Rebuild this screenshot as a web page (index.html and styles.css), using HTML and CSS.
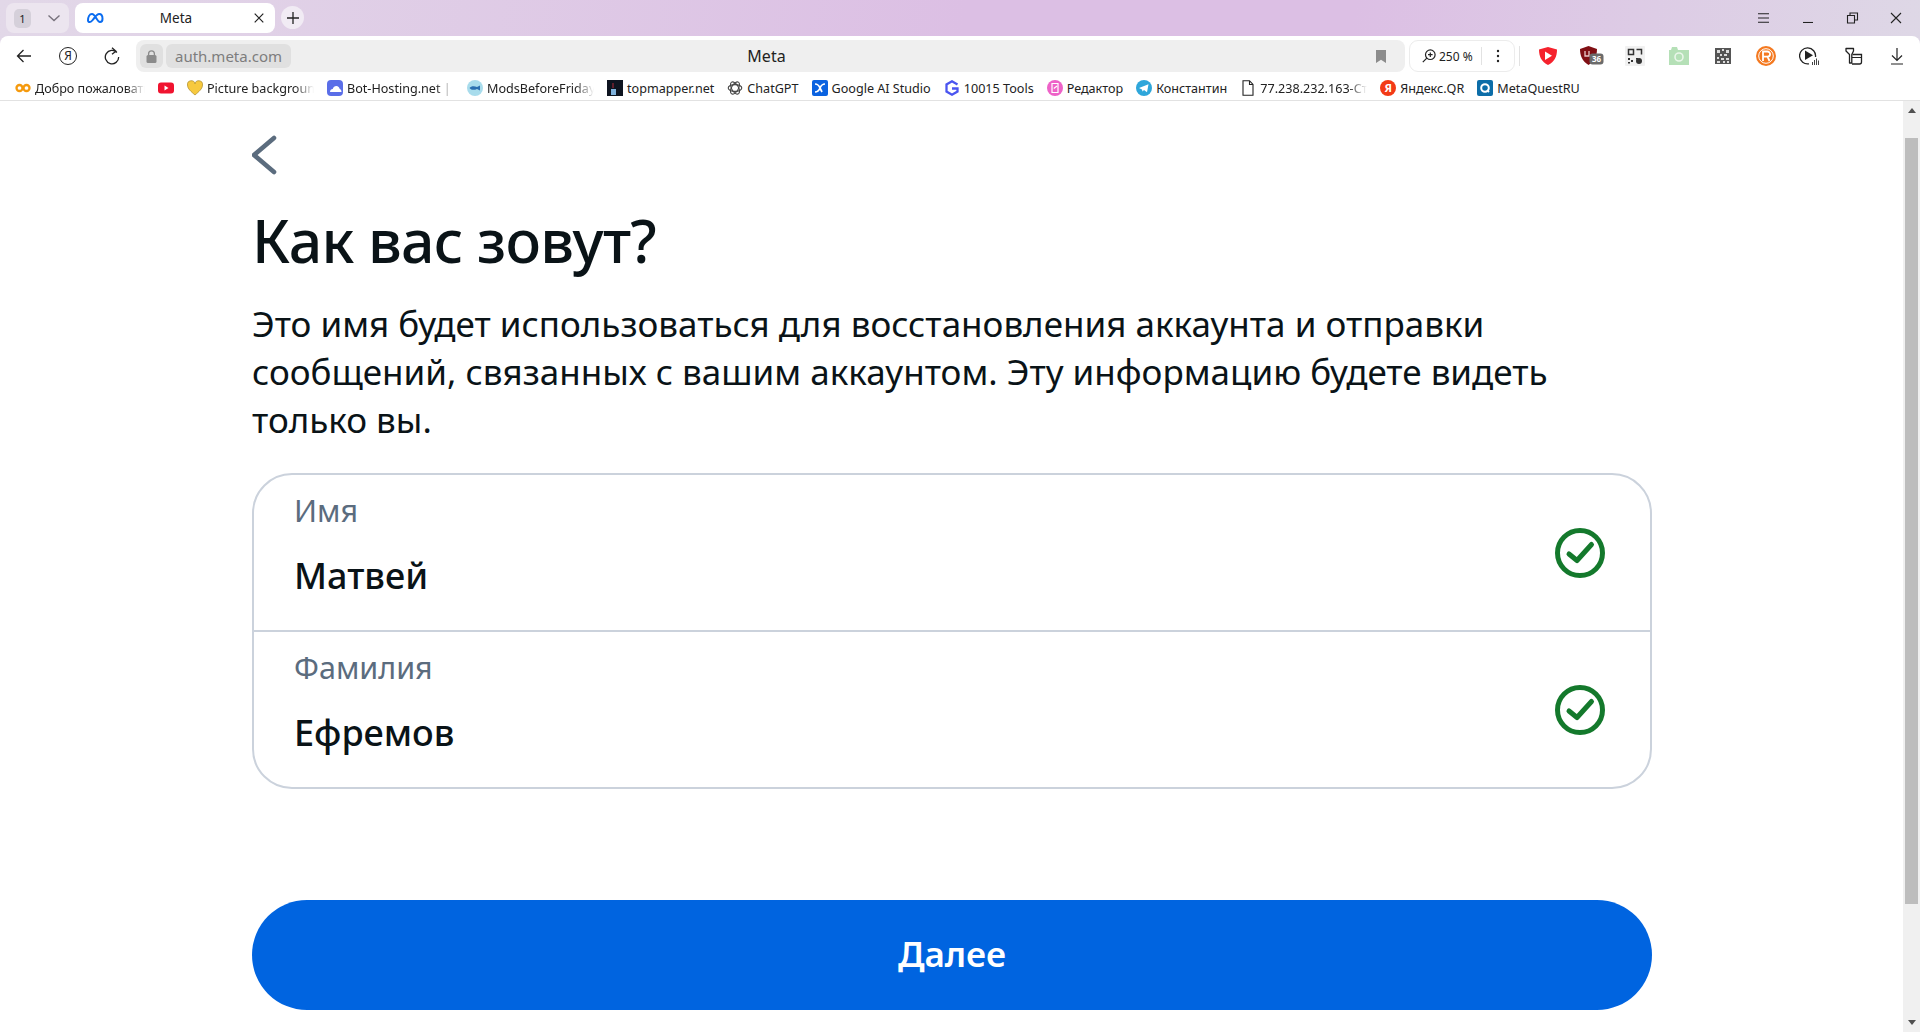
FILE: index.html
```html
<!DOCTYPE html>
<html lang="ru">
<head>
    <meta charset="UTF-8">
    <meta name="viewport" content="width=device-width, initial-scale=1.0">
    <title>Meta</title>
    <link rel="stylesheet" href="styles.css">
</head>
<body>
    <div id="chrome">
        <div id="tabstrip">
            <div class="tab-counter">
                <span class="tab-count">1</span>
                <svg class="tab-more" width="14" height="8" viewBox="0 0 14 8"><path d="M1.5 1.5 7 6.500l5.500-5" fill="none" stroke="#77727c" stroke-width="1.400"/></svg>
            </div>
            <div class="tab">
                <svg width="18" height="12" viewBox="0 0 18 12"><path d="M2 8.500C2 5 3.500 2 6 2c3.500 0 5 8 8 8 1.500 0 2.500-1.200 2.500-3.300C16.500 4 15.200 2 13.200 2 10.500 2 8.700 5.500 6.700 8c-.9 1.200-1.800 2-2.800 2C2.700 10 2 9.500 2 8.500z" fill="none" stroke="#0a6cf0" stroke-width="2"/></svg>
                <span class="tab-title">Meta</span>
                <svg width="10" height="10" viewBox="0 0 10 10"><path d="M.7.7l8.600 8.600M9.300.7.700 9.300" stroke="#222" stroke-width="1.200"/></svg>
            </div>
            <div class="tab-new">
                <svg width="12" height="12" viewBox="0 0 12 12"><path d="M6 0v12M0 6h12" stroke="#222" stroke-width="1.300"/></svg>
            </div>
            <div class="window-controls">
                <svg width="14" height="10" viewBox="0 0 14 10"><path d="M1 .8h11M1 5h11M1 9.200h11" stroke="#222" stroke-width="1.100"/></svg>
                <svg width="14" height="10" viewBox="0 0 14 10"><path d="M2 9.500h10" stroke="#222" stroke-width="1.100"/></svg>
                <svg width="14" height="12" viewBox="0 0 14 12"><path d="M2.500 3.500h7v7.500h-7zM5 3.500V1h7.500v7H9.500" fill="none" stroke="#222" stroke-width="1.100"/></svg>
                <svg width="14" height="12" viewBox="0 0 14 12"><path d="M2 1l10 10M12 1 2 11" stroke="#222" stroke-width="1.100"/></svg>
            </div>
        </div>

        <div id="toolbar">
            <div class="nav-row">
                <div class="nav-btn">
                    <svg width="16" height="14" viewBox="0 0 16 14"><path d="M15 7H1.500M7.500 1 1.500 7l6 6" fill="none" stroke="#222" stroke-width="1.300"/></svg>
                </div>
                <div class="nav-btn">
                    <span class="ya-circle">Я</span>
                </div>
                <div class="nav-btn">
                    <svg width="16" height="18" viewBox="0 0 16 18"><path d="M12.900 5.500A6.700 6.700 0 1 0 14.700 10M8 .8l3.900 3.400L8 7.300" fill="none" stroke="#222" stroke-width="1.300"/></svg>
                </div>
                <div class="urlbar">
                    <span class="lock-chip">
                        <svg width="11" height="13" viewBox="0 0 11 13"><path d="M2.600 5.500V3.700a2.900 2.900 0 0 1 5.800 0v1.800" fill="none" stroke="#8b8b8b" stroke-width="1.300"/><rect x=".5" y="5" width="10" height="8" rx="1.500" fill="#8b8b8b"/></svg>
                    </span>
                    <span class="domain-chip">auth.meta.com</span>
                    <span class="page-title">Meta</span>
                    <svg class="bookmark-flag" width="10" height="13" viewBox="0 0 10 13"><path d="M0 0h10v13L5 9.800 0 13z" fill="#8c8c8c"/></svg>
                </div>
                <div class="zoom-box">
                    <svg width="14" height="14" viewBox="0 0 14 14"><circle cx="8.300" cy="5.700" r="4.800" fill="none" stroke="#222" stroke-width="1.200"/><path d="M4.800 9.200.8 13.200M8.300 3.400v4.600M6 5.700h4.600" stroke="#222" stroke-width="1.200"/></svg>
                    <span class="zoom-value">250 %</span>
                    <span class="zoom-sep"></span>
                    <svg width="4" height="14" viewBox="0 0 4 14"><circle cx="2" cy="2" r="1.200" fill="#222"/><circle cx="2" cy="7" r="1.200" fill="#222"/><circle cx="2" cy="12" r="1.200" fill="#222"/></svg>
                </div>
                <span class="toolbar-sep"></span>
                <div class="extensions">
                    <div class="ext">
                        <svg width="20" height="20" viewBox="0 0 20 20"><path d="M1 3.500 10 1l9 2.500c0 7-2.500 12.500-9 15.500C3.500 16 1 10.500 1 3.500z" fill="#f5222d"/><path d="M7 5.500v8.500l7-4.200z" fill="#fff"/></svg>
                    </div>
                    <div class="ext">
                        <svg width="24" height="20" viewBox="0 0 24 20"><path d="M0 3 8.500 0 17 3c0 7-2.500 12.500-8.500 16C2.500 15.500 0 10 0 3z" fill="#800f14"/><path d="M5 5v5h4V5" fill="none" stroke="#e8c9c9" stroke-width="1.300"/><rect x="9.500" y="7.500" width="14" height="11" rx="3" fill="#6b6b6b"/><text x="16.500" y="16" class="ext-badge">36</text></svg>
                    </div>
                    <div class="ext">
                        <svg width="20" height="20" viewBox="0 0 20 20"><rect width="20" height="20" rx="1" fill="#f1f1f1"/><path d="M3.500 3.500h5v5h-5zM11.500 3.500h5v5" fill="none" stroke="#333" stroke-width="1.500"/><path d="M3 12h2v2H3zM6 14h2v2H6zM3 16h2v1.500H3zM11 12h2v1.500h-2z" fill="#333"/><circle cx="14" cy="15" r="3" fill="#333"/></svg>
                    </div>
                    <div class="ext">
                        <svg width="20" height="18" viewBox="0 0 20 18"><path d="M0 3h2l1-3h5l1 3h11v15H0z" fill="#b5e0b7"/><circle cx="10" cy="10" r="4" fill="none" stroke="#eaf6ea" stroke-width="1.600"/></svg>
                    </div>
                    <div class="ext">
                        <svg width="16" height="16" viewBox="0 0 16 16"><rect width="16" height="16" fill="#555"/><path d="M2 2h3v3H2zM7 1h2v2H7zM11 2h3v3h-3zM5 6h2v2H5zM9 6h3v2H9zM2 9h2v2H2zM6 10h3v2H6zM11 10h3v2h-3zM2 13h3v2H2zM8 13h2v2H8zM12 13h2v2h-2z" fill="#ddd"/></svg>
                    </div>
                    <div class="ext">
                        <svg width="20" height="20" viewBox="0 0 20 20"><circle cx="10" cy="10" r="10" fill="#f47920"/><circle cx="10" cy="10" r="7.300" fill="none" stroke="#fff" stroke-width="1"/><path d="M7 15V5.500h4.500a2.600 2.600 0 0 1 0 5.200H7m4.500 0 2 4.300" fill="none" stroke="#fff" stroke-width="1.800"/></svg>
                    </div>
                    <div class="ext">
                        <svg width="21" height="20" viewBox="0 0 21 20"><path d="M16.500 11A8 8 0 1 0 10 17.800" fill="none" stroke="#222" stroke-width="1.300"/><path d="M6 4.500v9.500l8-4.800z" fill="#222"/><path d="M13.500 16v3M15.500 14v5M17.500 12.500v6.500M19.500 14.500v4.500" stroke="#444" stroke-width="1"/></svg>
                    </div>
                    <div class="ext">
                        <svg width="18" height="18" viewBox="0 0 18 18"><path d="M1 1.500h7.500v2.500L6.800 7.500V16H4.500V7.500L1 4z" fill="none" stroke="#222" stroke-width="1.300" stroke-linejoin="round"/><path d="M7.500 7.500h9V15c0 1.200-1 2-2 2H7" fill="none" stroke="#222" stroke-width="1.300"/><path d="M7 10.500h9.500" stroke="#222" stroke-width="1"/></svg>
                    </div>
                    <div class="ext">
                        <svg width="14" height="17" viewBox="0 0 14 17"><path d="M7 0v12M2 7.500l5 5 5-5M1 16h12" fill="none" stroke="#222" stroke-width="1.200"/></svg>
                    </div>
                </div>
            </div>

            <div class="bookmarks">
                <div class="bm bm-cut bm-first">
                    <svg width="16" height="16" viewBox="0 0 16 16"><circle cx="4.500" cy="8" r="3" fill="none" stroke="#f59a0e" stroke-width="2.300"/><circle cx="11.500" cy="8" r="3" fill="none" stroke="#f59a0e" stroke-width="2.300"/></svg>
                    <span>Добро пожаловать</span>
                </div>
                <div class="bm">
                    <svg width="16" height="16" viewBox="0 0 16 16"><rect y="2.500" width="16" height="11" rx="3" fill="#f0132f"/><path d="M6.500 5.500v5l4-2.500z" fill="#fff"/></svg>
                </div>
                <div class="bm bm-cut bm-mid">
                    <svg width="16" height="16" viewBox="0 0 16 16"><path d="M8 15C4 11.500.5 8.800.5 5A3.800 3.800 0 0 1 8 3.800 3.800 3.800 0 0 1 15.500 5C15.500 8.800 12 11.500 8 15z" fill="#f7c93e" stroke="#a98a2a" stroke-width=".7"/></svg>
                    <span>Picture background</span>
                </div>
                <div class="bm bm-cut bm-mid">
                    <svg width="16" height="16" viewBox="0 0 16 16"><rect width="16" height="16" rx="4" fill="#5a6ee8"/><path d="M3 12c0-2 1.300-3 2.700-3 .5-2 2-3 3.500-3 2 0 3.300 1.500 3.500 3 1 .2 1.800 1.300 1.800 3z" fill="#fff"/></svg>
                    <span>Bot-Hosting.net | Free</span>
                </div>
                <div class="bm bm-cut bm-mid">
                    <svg width="16" height="16" viewBox="0 0 16 16"><circle cx="8" cy="8" r="8" fill="#a8dcec"/><path d="M2.500 8C4 6 7 5.500 10 7l3-1.500v5L10 9c-3 1.500-6 1-7.500-1z" fill="#2a6fb0"/></svg>
                    <span>ModsBeforeFriday</span>
                </div>
                <div class="bm">
                    <svg width="16" height="16" viewBox="0 0 16 16"><rect width="16" height="16" fill="#0e1420"/><rect x="4" y="9" width="5" height="6" fill="#7fb2dc"/><path d="M6 3v5" stroke="#7a2230" stroke-width="1.500"/></svg>
                    <span>topmapper.net</span>
                </div>
                <div class="bm">
                    <svg width="16" height="16" viewBox="0 0 16 16"><g fill="none" stroke="#444" stroke-width="1.100"><ellipse cx="8" cy="8" rx="6.800" ry="3.400"/><ellipse cx="8" cy="8" rx="6.800" ry="3.400" transform="rotate(60 8 8)"/><ellipse cx="8" cy="8" rx="6.800" ry="3.400" transform="rotate(120 8 8)"/></g></svg>
                    <span>ChatGPT</span>
                </div>
                <div class="bm">
                    <svg width="16" height="16" viewBox="0 0 16 16"><rect width="16" height="16" rx="2" fill="#0a62e0"/><path d="M3 4c2 0 4 1.500 5 4 1-2.500 2-4 5-4M8 8c-1 2.500-2.500 4-5 4M8 8l2 4" fill="none" stroke="#fff" stroke-width="1.700"/></svg>
                    <span>Google AI Studio</span>
                </div>
                <div class="bm">
                    <svg width="16" height="16" viewBox="0 0 16 16"><path d="M13.500 4.500 8 1.300 2.500 4.500v7L8 14.700l5.500-3.200V8.500H8" fill="none" stroke="#4b55f0" stroke-width="2.300"/></svg>
                    <span>10015 Tools</span>
                </div>
                <div class="bm">
                    <svg width="16" height="16" viewBox="0 0 16 16"><circle cx="8" cy="8" r="8" fill="#ee62c8"/><path d="M5 3.500h6v9H5z" fill="none" stroke="#fff" stroke-width="1.200"/><path d="M6.800 8.500 10 6" stroke="#fff" stroke-width="1.200"/></svg>
                    <span>Редактор</span>
                </div>
                <div class="bm">
                    <svg width="16" height="16" viewBox="0 0 16 16"><circle cx="8" cy="8" r="8" fill="#2ea6da"/><path d="M3 8l9.500-3.800-1.500 8L8 10l-1.500 1.500L6 9.500z" fill="#fff"/></svg>
                    <span>Константин</span>
                </div>
                <div class="bm bm-cut bm-ip">
                    <svg width="16" height="16" viewBox="0 0 16 16"><path d="M3 .7h6.500L13 4.500v10.800H3zM9.500.7v3.800H13" fill="none" stroke="#222" stroke-width="1.100"/></svg>
                    <span>77.238.232.163-Статус</span>
                </div>
                <div class="bm">
                    <span class="ya-mark">Я</span>
                    <span>Яндекс.QR</span>
                </div>
                <div class="bm">
                    <svg width="16" height="16" viewBox="0 0 16 16"><rect width="16" height="16" rx="2" fill="#0c6da8"/><circle cx="8" cy="8" r="3.800" fill="none" stroke="#fff" stroke-width="2"/><path d="M10 10l2 2" stroke="#fff" stroke-width="1.800"/></svg>
                    <span>MetaQuestRU</span>
                </div>
            </div>
        </div>
    </div>

    <div id="viewport">
        <main class="page">
            <svg class="back" width="26" height="40" viewBox="0 0 26 40"><path d="M22 3 2 20l20 17" fill="none" stroke="#5b6c7e" stroke-width="4.600" stroke-linecap="round" stroke-linejoin="round"/></svg>
            <h1>Как вас зовут?</h1>
            <p class="lead">Это имя будет использоваться для восстановления аккаунта и отправки сообщений, связанных с вашим аккаунтом. Эту информацию будете видеть только вы.</p>
            <div class="fields">
                <div class="field">
                    <div class="field-text">
                        <label>Имя</label>
                        <div class="field-value">Матвей</div>
                    </div>
                    <svg width="50" height="50" viewBox="0 0 50 50"><circle cx="25" cy="25" r="22.500" fill="none" stroke="#14792c" stroke-width="5"/><path d="M14 26l8 6.500L36.500 16.500" fill="none" stroke="#14792c" stroke-width="5" stroke-linecap="round" stroke-linejoin="round"/></svg>
                </div>
                <div class="field">
                    <div class="field-text">
                        <label>Фамилия</label>
                        <div class="field-value">Ефремов</div>
                    </div>
                    <svg width="50" height="50" viewBox="0 0 50 50"><circle cx="25" cy="25" r="22.500" fill="none" stroke="#14792c" stroke-width="5"/><path d="M14 26l8 6.500L36.500 16.500" fill="none" stroke="#14792c" stroke-width="5" stroke-linecap="round" stroke-linejoin="round"/></svg>
                </div>
            </div>
            <button class="next">Далее</button>
        </main>
        <div class="scrollbar">
            <span class="arrow-up"></span>
            <div class="scroll-track"><div class="scroll-thumb"></div></div>
            <span class="arrow-down"></span>
        </div>
    </div>
</body>
</html>
```

FILE: styles.css
```css
* {
    box-sizing: border-box;
}
html, body {
    height: 100%;
}
body {
    margin: 0;
    display: flex;
    flex-direction: column;
    overflow: hidden;
    background: #fff;
    color: #222;
    font-family: "Noto Sans", "Open Sans", sans-serif;
}

/* tab strip */
#chrome {
    background: linear-gradient(100deg, #e2d8e8 0%, #dcbfe4 50%, #dcbfe4 70%, #ded8e6 100%);
}
#tabstrip {
    height: 36px;
    padding: 3px 0 3px 6px;
    display: flex;
    align-items: stretch;
}
.tab-counter {
    width: 63px;
    display: flex;
    align-items: center;
    padding-left: 8px;
    background: #ece5ef;
    border-radius: 8px;
}
.tab-count {
    width: 17px;
    height: 19px;
    background: #d5d0da;
    border-radius: 5px;
    font-size: 11px;
    line-height: 19px;
    text-align: center;
}
.tab-more {
    margin-left: 16px;
}
.tab {
    width: 200px;
    margin-left: 6px;
    padding: 0 11px 0 11px;
    display: flex;
    align-items: center;
    background: #fff;
    border-radius: 8px;
}
.tab-title {
    flex: 1;
    text-align: center;
    font-size: 13.500px;
    padding-right: 6px;
}
.tab-new {
    width: 23px;
    height: 23px;
    margin: 3px 0 0 6px;
    display: flex;
    align-items: center;
    justify-content: center;
    background: #f1ebf4;
    border-radius: 50%;
}
.window-controls {
    margin-left: auto;
    display: flex;
    align-items: center;
    gap: 30px;
    padding-right: 17px;
}

/* toolbar */
#toolbar {
    height: 65px;
    background: #fff;
    border-radius: 8px 8px 0 0;
    border-bottom: 1px solid #e2e2e2;
}
.nav-row {
    height: 40px;
    padding: 4px 0 4px 2px;
    display: flex;
    align-items: center;
}
.nav-btn {
    width: 44px;
    display: flex;
    justify-content: center;
}
.ya-circle {
    width: 18px;
    height: 18px;
    border: 1.2px solid #222;
    border-radius: 50%;
    font-size: 12px;
    line-height: 16px;
    text-align: center;
}
.urlbar {
    position: relative;
    width: 1269px;
    height: 32px;
    margin-left: 2px;
    padding: 0 19px 0 4px;
    display: flex;
    align-items: center;
    gap: 3px;
    background: #efefef;
    border-radius: 8px;
}
.lock-chip {
    width: 23px;
    height: 24px;
    display: flex;
    align-items: center;
    justify-content: center;
    background: #e0e0e0;
    border-radius: 6px;
}
.domain-chip {
    width: 125px;
    height: 24px;
    background: #e0e0e0;
    border-radius: 6px;
    color: #7d7d7d;
    font-size: 15px;
    line-height: 24px;
    text-align: center;
}
.page-title {
    position: absolute;
    left: 0;
    right: 8px;
    text-align: center;
    font-size: 16px;
}
.bookmark-flag {
    margin-left: auto;
}
.zoom-box {
    width: 106px;
    height: 32px;
    margin-left: 4px;
    padding: 0 0 0 12px;
    display: flex;
    align-items: center;
    border: 1px solid #ececec;
    border-radius: 9px;
}
.zoom-value {
    margin-left: 3px;
    font-size: 12px;
    width: 38px;
}
.zoom-sep {
    width: 1px;
    height: 18px;
    margin: 0 14px 0 4px;
    background: #e2e2e2;
}
.toolbar-sep {
    width: 1px;
    height: 20px;
    margin-left: 4px;
    background: #e2e2e2;
}
.extensions {
    display: flex;
    margin-left: 6px;
}
.ext {
    width: 43.700px;
    display: flex;
    justify-content: center;
    align-items: center;
}
.ext-badge {
    fill: #fff;
    font-size: 8px;
    font-weight: 700;
    text-anchor: middle;
}

/* bookmarks */
.bookmarks {
    height: 24px;
    padding-left: 15px;
    display: flex;
    align-items: center;
    gap: 13px;
    font-size: 12.600px;
    white-space: nowrap;
}
.bm {
    display: flex;
    align-items: center;
    gap: 4px;
    flex: none;
}
.bm svg {
    flex: none;
}
.bm-cut {
    overflow: hidden;
    -webkit-mask-image: linear-gradient(to right, #000 85%, transparent 100%);
    mask-image: linear-gradient(to right, #000 85%, transparent 100%);
}
.bm-cut span {
    min-width: 0;
    overflow: hidden;
}
.bm-first { width: 130px; }
.bm-mid { width: 127px; }
.bm-ip { width: 127px; }
.ya-mark {
    width: 16px;
    height: 16px;
    background: #f33a16;
    border-radius: 50%;
    color: #fff;
    font-size: 11px;
    font-weight: 700;
    line-height: 16px;
    text-align: center;
}

/* page */
#viewport {
    flex: 1;
    min-height: 0;
    display: flex;
}
.page {
    flex: 1;
    padding: 34px 251px 0 252px;
    color: #0a1317;
}
.back {
    display: block;
}
h1 {
    margin: 29px 0 0;
    font-size: 59px;
    font-weight: 500;
    letter-spacing: -0.8px;
    line-height: 72px;
}
.lead {
    margin: 24px 0 0;
    font-size: 35px;
    line-height: 48px;
}
.fields {
    margin-top: 29px;
    border: 2px solid #cbd2dc;
    border-radius: 40px;
}
.field {
    height: 155px;
    padding: 0 45px 0 40px;
    display: flex;
    align-items: center;
    justify-content: space-between;
}
.field + .field {
    height: 157px;
    border-top: 2px solid #cbd2dc;
}
.field-text {
    padding-bottom: 16px;
}
.field label {
    display: block;
    color: #5b6c7e;
    font-size: 30.500px;
    line-height: 40px;
}
.field-value {
    margin-top: 22px;
    font-size: 36px;
    font-weight: 500;
    line-height: 48px;
}
.next {
    display: block;
    width: 100%;
    height: 110px;
    margin-top: 111px;
    padding: 0 0 4px;
    border: 0;
    border-radius: 55px;
    background: #0064e0;
    color: #fff;
    font-family: inherit;
    font-size: 35px;
    font-weight: 600;
}

/* scrollbar */
.scrollbar {
    width: 17px;
    display: flex;
    flex-direction: column;
    align-items: center;
    background: #f0f0f0;
}
.scroll-track {
    flex: 1;
    width: 100%;
    padding: 25px 2px 0;
}
.scroll-thumb {
    height: 766px;
    background: #bdbdbd;
}
.arrow-up {
    margin-top: 7px;
    border: 4px solid transparent;
    border-top: 0;
    border-bottom: 5px solid #505050;
}
.arrow-down {
    margin-bottom: 7px;
    border: 4px solid transparent;
    border-bottom: 0;
    border-top: 5px solid #505050;
}
```
